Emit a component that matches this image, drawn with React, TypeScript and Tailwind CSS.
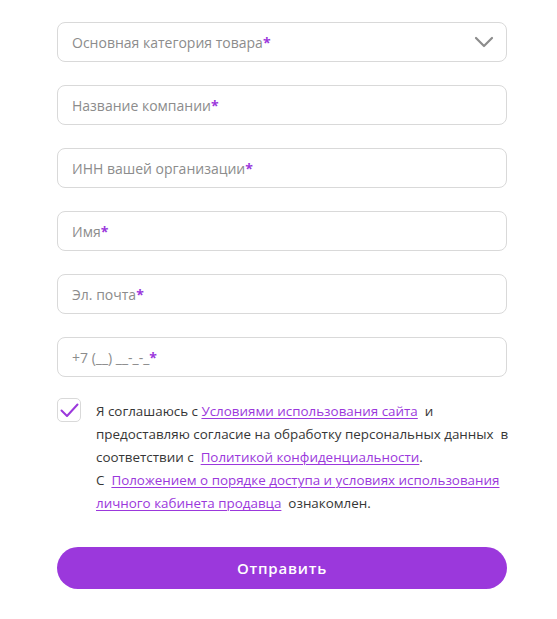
import React from "react";

const fields = [
  "Название компании",
  "ИНН вашей организации",
  "Имя",
  "Эл. почта",
];

const Field = ({ label, select }: { label: string; select?: boolean }) => (
  <div className="h-[40px] w-full rounded-[8px] border border-[#d9d9d9] bg-white flex items-center justify-between pl-[14px] pr-[12px]">
    <span className="text-[14px] text-[#8c8c8c]">
      {label}
      <span className="text-[#9b38dc] font-bold">*</span>
    </span>
    {select && (
      <svg width="20" height="12" viewBox="0 0 20 12" fill="none">
        <path d="M2 2l8 8 8-8" stroke="#8c8c8c" strokeWidth="2.2" strokeLinecap="round" strokeLinejoin="round" />
      </svg>
    )}
  </div>
);

const A = ({ children }: { children: React.ReactNode }) => (
  <a href="#" className="text-[#9b38dc] underline underline-offset-2 decoration-1">
    {children}
  </a>
);

export default function App() {
  return (
    <div className="min-h-[619px] bg-white font-['Open_Sans',sans-serif]">
      <form className="w-[450px] ml-[57px] pt-[22px] flex flex-col">
        <div className="flex flex-col gap-[23px]">
          <Field label="Основная категория товара" select />
          {fields.map((f) => (
            <Field key={f} label={f} />
          ))}
          <Field label="+7 (__) __-_-_" />
        </div>

        <div className="flex gap-[15px] mt-[22px]">
          <div className="w-[24px] h-[24px] shrink-0 mt-[-1px] rounded-[5px] border border-[#d9d9d9] flex items-center justify-center">
            <svg width="19" height="15" viewBox="0 0 19 15" fill="none">
              <path d="M1.5 7.5l5.5 5.5L17.5 1.5" stroke="#9b38dc" strokeWidth="2" strokeLinecap="round" strokeLinejoin="round" />
            </svg>
          </div>
          <p className="text-[13.4px] leading-[23px] pt-[1px] text-[#363636] whitespace-nowrap">
            Я соглашаюсь с <A>Условиями использования сайта</A>&nbsp; и
            <br />
            предоставляю согласие на обработку персональных данных&nbsp; в
            <br />
            соответствии с&nbsp; <A>Политикой конфиденциальности</A>.
            <br />
            С&nbsp; <A>Положением о порядке доступа и условиях использования </A>
            <br />
            <A>личного кабинета продавца</A>&nbsp; ознакомлен.
          </p>
        </div>

        <button
          type="button"
          className="mt-[32px] h-[42px] w-full rounded-full bg-[#9b38dc] text-white text-[15px] font-semibold tracking-[0.8px]"
        >
          Отправить
        </button>
      </form>
    </div>
  );
}
